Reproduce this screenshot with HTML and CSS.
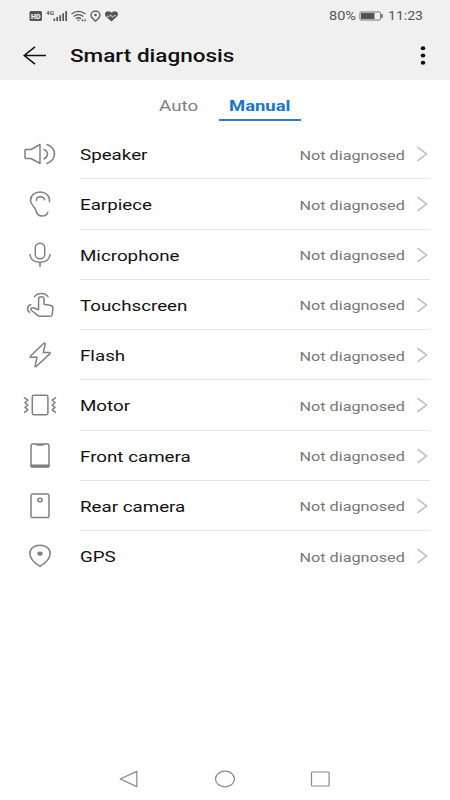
FILE: index.html
```html
<!DOCTYPE html>
<html lang="en">
<head>
    <meta charset="UTF-8">
    <meta name="viewport" content="width=device-width, initial-scale=1.0">
    <title>Smart diagnosis</title>
    <link rel="stylesheet" href="styles.css">
</head>
<body>

    <header>
        <div class="status-bar">
            <svg class="status-icons" width="92" height="16" viewBox="0 0 92 16">
                <rect x="1.5" y="3" width="12.5" height="10" rx="1.5" fill="#555"/>
                <text class="hd" x="3" y="10.8" textLength="9.5" lengthAdjust="spacingAndGlyphs">HD</text>
                <text class="net" x="18" y="7" textLength="8" lengthAdjust="spacingAndGlyphs">4G</text>
                <path d="M26.3 10.5V13M29.2 9V13M32.2 7.3V13M35.2 5.2V13M38.2 3V13" stroke="#555" stroke-width="1.7"/>
                <path d="M43.5 6Q50.5 .8 57.5 6M45.6 8.4Q50.5 4.8 55.3 8.4M47.8 10.6Q50.5 8.9 53 10.6" fill="none" stroke="#555" stroke-width="1.3"/>
                <path d="M49 11.8h3l-1.5 1.5zM53.6 11.5h1.6v1.8h-1.6zM56.2 11.5h1.6v1.8h-1.6z" fill="#555"/>
                <path d="M67.5 13.2C64.5 10.8 63 9 63 7C63 4.8 65 3.2 67.5 3.2S72 4.8 72 7C72 9 70.5 10.8 67.5 13.2Z" fill="none" stroke="#555" stroke-width="1.3"/>
                <circle cx="67.5" cy="7" r="1.3" fill="#555"/>
                <path d="M83.5 13.5L78 8.5C75.8 6 77.5 3.2 80 3.2C81.8 3.2 83 4 83.5 4.8C84 4 85.2 3.2 87 3.2C89.5 3.2 91.2 6 89 8.5Z" fill="#555"/>
                <path d="M79 8.3H81.5L82.6 6.8L84.4 9.4L85.5 7.8H88" fill="none" stroke="#f0f0f0" stroke-width=".8"/>
            </svg>
            <div class="status-right">
                <span class="battery-text"><span class="wide">80%</span></span>
                <svg width="25" height="12" viewBox="0 0 25 12">
                    <rect x=".9" y="2" width="20.6" height="8" rx="1.2" fill="none" stroke="#777" stroke-width="1"/>
                    <rect x="2" y="3" width="13.5" height="6" fill="#555"/>
                    <path d="M23 4V8" stroke="#555" stroke-width="1.3"/>
                </svg>
                <span class="clock"><span class="wide">11:23</span></span>
            </div>
        </div>
        <div class="title-bar">
            <svg class="back" width="24" height="20" viewBox="0 0 24 20" fill="none" stroke="#111" stroke-width="1.5">
                <path d="M23 9.5H1.2M12 .8L1.2 9.5L12 18.2"/>
            </svg>
            <h1><span class="wide">Smart diagnosis</span></h1>
            <svg class="more" width="6" height="20" viewBox="0 0 6 20" fill="#111">
                <ellipse cx="3" cy="2.2" rx="2.3" ry="2"/>
                <ellipse cx="3" cy="9.5" rx="2.3" ry="2"/>
                <ellipse cx="3" cy="16.8" rx="2.3" ry="2"/>
            </svg>
        </div>
    </header>

    <nav class="tabs">
        <div class="tab"><span class="wide">Auto</span></div>
        <div class="tab active"><span class="wide">Manual</span></div>
    </nav>

    <main>
        <div class="row">
            <svg class="icon" viewBox="0 0 34 30">
                <path d="M2.5 10.5Q2 10.5 2 11.5V18.5Q2 19.5 3 19.5H8L17 24.5V5.5L8 10.5Z"/>
                <path d="M21 10.3Q24.5 12 24.5 15T21 20M24 5.5Q31.5 8.5 31.5 15T24 24.5"/>
            </svg>
            <div class="name"><span class="wide">Speaker</span></div>
            <div class="state"><span class="wide">Not diagnosed</span></div>
            <svg class="arrow" viewBox="0 0 12 16"><path d="M1.5 1.2L10.5 8L1.5 14.8"/></svg>
        </div>
        <div class="row">
            <svg class="icon" viewBox="0 0 34 30">
                <path d="M26.5 12.5C27 6.5 22.5 3 17 3C11.5 3 7.5 6.5 7.5 11.5C7.5 16 11.5 17 12.5 20.5C13.5 25 15.5 27 19 27C22 27 24.2 25.5 24.8 23.2"/>
                <path d="M13.3 11.5C13.3 9 15 7.8 17.3 7.8C19.5 7.8 21.3 9 21.5 10.8"/>
            </svg>
            <div class="name"><span class="wide">Earpiece</span></div>
            <div class="state"><span class="wide">Not diagnosed</span></div>
            <svg class="arrow" viewBox="0 0 12 16"><path d="M1.5 1.2L10.5 8L1.5 14.8"/></svg>
        </div>
        <div class="row">
            <svg class="icon" viewBox="0 0 34 30">
                <rect x="12.3" y="3.3" width="9.4" height="15.5" rx="4.5"/>
                <path d="M7 14.5C7.5 19.5 11.5 22.2 17 22.2S26.5 19.5 27 14.5M17 22.2V26.5"/>
            </svg>
            <div class="name"><span class="wide">Microphone</span></div>
            <div class="state"><span class="wide">Not diagnosed</span></div>
            <svg class="arrow" viewBox="0 0 12 16"><path d="M1.5 1.2L10.5 8L1.5 14.8"/></svg>
        </div>
        <div class="row">
            <svg class="icon" viewBox="0 0 34 30">
                <path d="M15.6 17.7V8.8C15.6 5.9 21 5.9 21 8.8V14.2L28 15.4Q30.2 15.9 30 18L29.2 24.5Q29 26.2 27 26.2H17Q15.5 26.2 14.5 25.2L8.5 20.5C7 19 8.3 17.3 10.3 17.8L15.6 19.8Z"/>
                <path d="M11.5 6.8C13.5 2.3 23 2.3 25 6.8M7.8 14.8C3.5 15.8 3.8 20.7 6.7 22.3"/>
            </svg>
            <div class="name"><span class="wide">Touchscreen</span></div>
            <div class="state"><span class="wide">Not diagnosed</span></div>
            <svg class="arrow" viewBox="0 0 12 16"><path d="M1.5 1.2L10.5 8L1.5 14.8"/></svg>
        </div>
        <div class="row">
            <svg class="icon" viewBox="0 0 34 30">
                <path d="M20.8 3.3L7.3 16.2Q6.8 17.3 8 17.3H14L12 26.3Q12.3 27.3 13.2 26.5L27 13.6Q27.5 12.6 26.3 12.5H20.3L22.3 3.8Q21.8 2.7 20.8 3.3Z"/>
            </svg>
            <div class="name"><span class="wide">Flash</span></div>
            <div class="state"><span class="wide">Not diagnosed</span></div>
            <svg class="arrow" viewBox="0 0 12 16"><path d="M1.5 1.2L10.5 8L1.5 14.8"/></svg>
        </div>
        <div class="row">
            <svg class="icon" viewBox="0 0 34 30">
                <rect x="9.3" y="5.2" width="15.6" height="19.6" rx="1.5"/>
                <path d="M1.5 7.8L4.8 10.2L2 12.6L4.8 15L2 17.4L4.8 19.8L1.5 22.4M32.5 7.8L29.2 10.2L32 12.6L29.2 15L32 17.4L29.2 19.8L32.5 22.4"/>
            </svg>
            <div class="name"><span class="wide">Motor</span></div>
            <div class="state"><span class="wide">Not diagnosed</span></div>
            <svg class="arrow" viewBox="0 0 12 16"><path d="M1.5 1.2L10.5 8L1.5 14.8"/></svg>
        </div>
        <div class="row">
            <svg class="icon" viewBox="0 0 34 30">
                <rect x="8" y="3" width="18" height="23" rx="1.8"/>
                <path d="M8.5 24.9H25.5" stroke-width="2.6"/>
                <path d="M14 4H20"/>
            </svg>
            <div class="name"><span class="wide">Front camera</span></div>
            <div class="state"><span class="wide">Not diagnosed</span></div>
            <svg class="arrow" viewBox="0 0 12 16"><path d="M1.5 1.2L10.5 8L1.5 14.8"/></svg>
        </div>
        <div class="row">
            <svg class="icon" viewBox="0 0 34 30">
                <rect x="8" y="3" width="18" height="23.5" rx="1.8"/>
                <ellipse cx="17" cy="9" rx="2.2" ry="1.8"/>
            </svg>
            <div class="name"><span class="wide">Rear camera</span></div>
            <div class="state"><span class="wide">Not diagnosed</span></div>
            <svg class="arrow" viewBox="0 0 12 16"><path d="M1.5 1.2L10.5 8L1.5 14.8"/></svg>
        </div>
        <div class="row">
            <svg class="icon" viewBox="0 0 34 30">
                <path d="M17 25.4C10.5 21.1 6.8 17.1 6.8 12.4C6.8 7.6 11.2 4.2 17 4.2S27.2 7.6 27.2 12.4C27.2 17.1 23.5 21.1 17 25.4Z"/>
                <ellipse cx="17" cy="12.6" rx="2.7" ry="2.2" fill="#808080" stroke="none"/>
            </svg>
            <div class="name"><span class="wide">GPS</span></div>
            <div class="state"><span class="wide">Not diagnosed</span></div>
            <svg class="arrow" viewBox="0 0 12 16"><path d="M1.5 1.2L10.5 8L1.5 14.8"/></svg>
        </div>
    </main>

    <footer>
        <svg width="20" height="18" viewBox="0 0 20 18"><path d="M17.8 1.4V16.6L1.2 9Z"/></svg>
        <svg width="22" height="18" viewBox="0 0 22 18"><ellipse cx="11" cy="9" rx="9.5" ry="7.8"/></svg>
        <svg width="20" height="18" viewBox="0 0 20 18"><rect x="1.5" y="2" width="17.6" height="14" rx=".8"/></svg>
    </footer>

</body>
</html>
```
FILE: styles.css
```css
body {
    margin: 0;
    padding: 0;
    height: 800px;
    display: flex;
    flex-direction: column;
    overflow: hidden;
    font-family: Roboto, sans-serif;
    background-color: #fff;
    color: #111;
}

svg {
    display: block;
    flex: none;
}

/* The text is wider than normal Roboto */
.wide {
    display: inline-block;
    transform: scaleX(1.21);
    transform-origin: left center;
    white-space: nowrap;
}

header {
    height: 80px;
    background-color: #f0f0f0;
}

.status-bar {
    display: flex;
    justify-content: space-between;
    height: 32px;
    padding: 0 27px 0 28px;
    color: #555;
    font-size: 12px;
    line-height: 32px;
}

.status-icons {
    margin-top: 8px;
}

.hd {
    font-size: 8px;
    font-weight: 900;
    fill: #f0f0f0;
}

.net {
    font-size: 6px;
    font-weight: 700;
    fill: #555;
}

.status-right {
    display: flex;
    align-items: center;
}

.battery-text {
    width: 30px;
}

.clock {
    width: 35px;
    margin-left: 4px;
}

.clock .wide {
    transform: scaleX(1.17);
}

.title-bar {
    display: flex;
    align-items: center;
    height: 48px;
    padding: 0 24px 0 23px;
}

h1 {
    flex: 1;
    margin: 0 0 0 23px;
    font-size: 18px;
    font-weight: 500;
    line-height: 50px;
}

h1 .wide {
    transform: scaleX(1.25);
}

.tabs {
    display: flex;
    height: 49px;
    padding-left: 140px;
}

.tab {
    box-sizing: border-box;
    width: 79px;
    height: 41px;
    padding-left: 19px;
    font-size: 15.5px;
    line-height: 52px;
    color: #808080;
}

.tab.active {
    width: 82px;
    padding-left: 10px;
    font-weight: 700;
    color: #1477cc;
    border-bottom: 2px solid #2a7fc8;
}

.tab.active .wide {
    transform: scaleX(1.19);
}

/* Diagnosis list */
.row {
    display: flex;
    align-items: center;
    box-sizing: border-box;
    height: 50.25px;
    margin-right: 20px;
    padding-left: 23px;
    background: linear-gradient(#e4e4e4, #e4e4e4) 80px 100% / 100% 1px no-repeat;
}

.row:last-child {
    background: none;
}

.icon {
    width: 34px;
    height: 30px;
    fill: none;
    stroke: #808080;
    stroke-width: 1.5;
    stroke-linejoin: round;
    stroke-linecap: round;
}

.name {
    flex: 1;
    margin-left: 23px;
    padding-top: 2px;
    font-size: 15.5px;
}

.state {
    padding-top: 1px;
    font-size: 13.5px;
    color: #777;
}

.state .wide {
    transform: scaleX(1.2);
    transform-origin: right center;
}

.arrow {
    width: 12px;
    height: 16px;
    margin: 0 2px 0 11px;
    fill: none;
    stroke: #bbb;
    stroke-width: 1.5;
}

footer {
    display: flex;
    justify-content: space-between;
    margin-top: auto;
    padding: 0 120px 12px 119px;
}

footer svg {
    fill: none;
    stroke: #888;
    stroke-width: 1.2;
    stroke-linejoin: round;
}
```
